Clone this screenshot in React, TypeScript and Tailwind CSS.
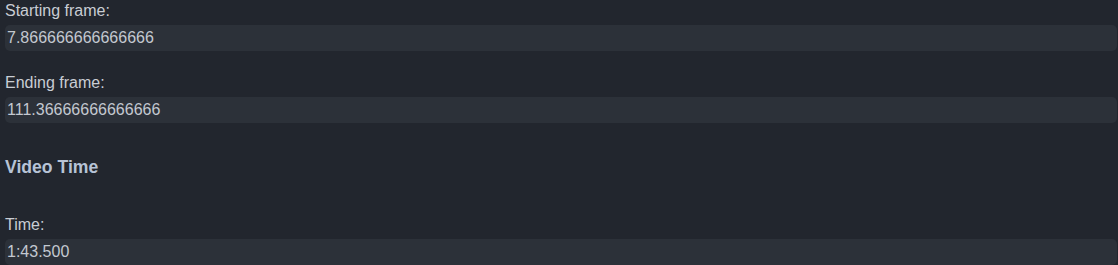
const fields = {
  start: '7.866666666666666',
  end: '111.36666666666666',
  time: '1:43.500',
};

function Field({ label, value }: { label: string; value: string }) {
  return (
    <div className="flex flex-col gap-[3px]">
      <label className="text-[16px] leading-[22px] text-[#c9cdd4]">{label}</label>
      <div className="h-[26px] rounded-[5px] bg-[#2c3139] px-[2px] text-[16px] leading-[26px] text-[#c3c8d0]">
        {value}
      </div>
    </div>
  );
}

export default function App() {
  return (
    <div className="h-[265px] w-full overflow-hidden bg-[#22262e] pl-[5px] pr-[1px] font-[family-name:Liberation_Sans,Arial,sans-serif]">
      <div className="flex flex-col">
        <Field label="Starting frame:" value={fields.start} />
        <div className="h-[21px]" />
        <Field label="Ending frame:" value={fields.end} />
        <h3 className="mt-[33px] text-[17.6px] font-bold leading-[22px] text-[#b7c3d6]">Video Time</h3>
        <div className="h-[36px]" />
        <Field label="Time:" value={fields.time} />
      </div>
    </div>
  );
}
